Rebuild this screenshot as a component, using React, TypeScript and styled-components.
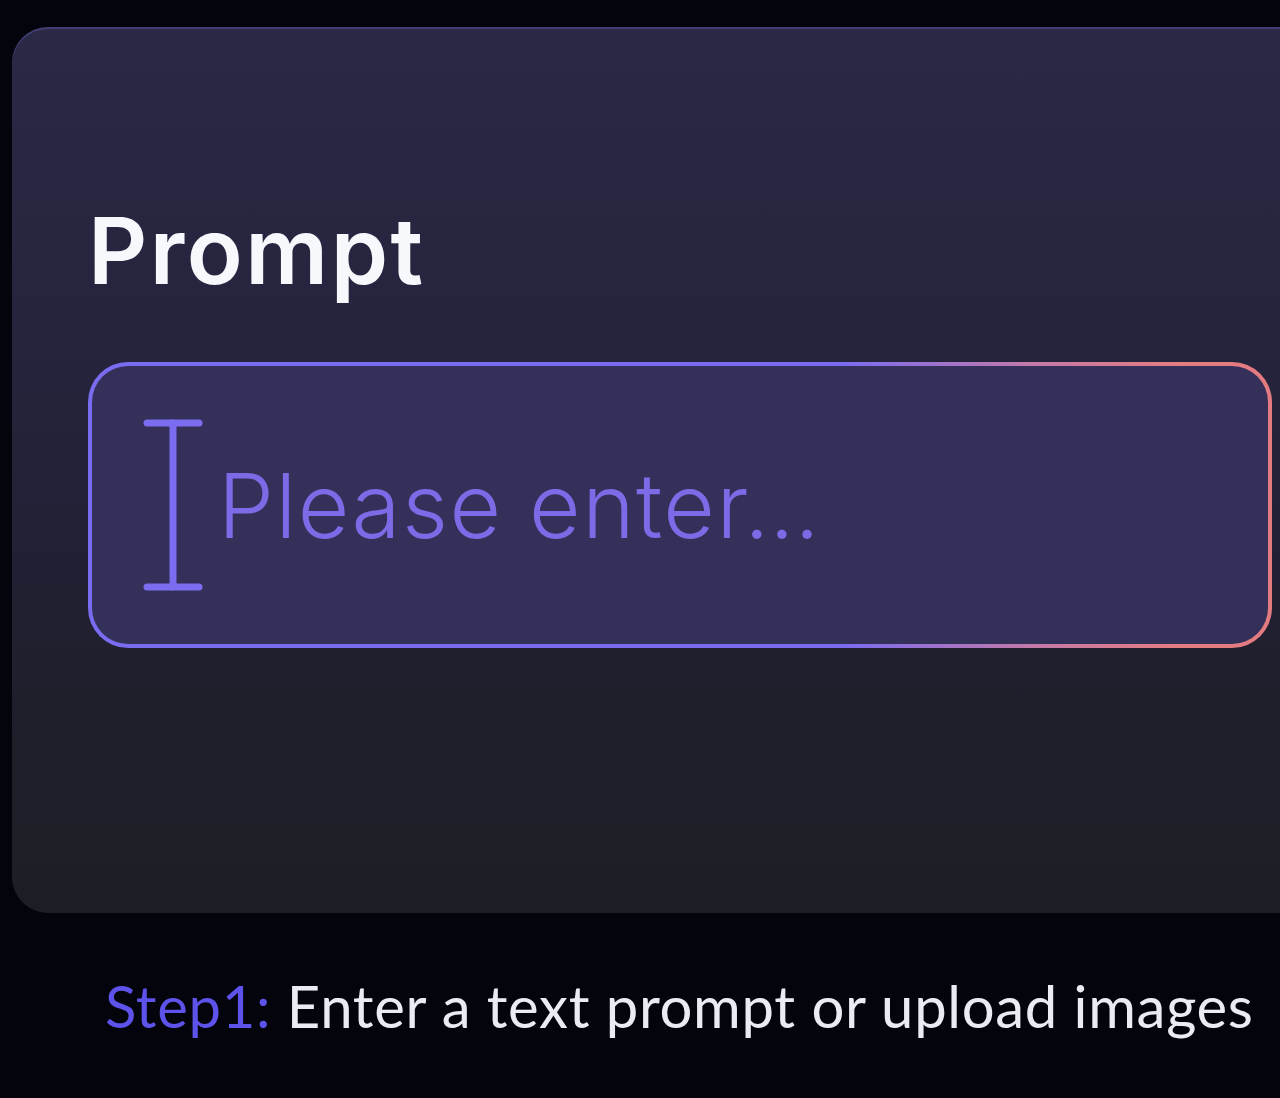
import React from "react";
import styled, { createGlobalStyle } from "styled-components";

const Global = createGlobalStyle`
  html, body {
    margin: 0;
    padding: 0;
    background: #03040c;
  }
  body {
    font-family: "Inter", "Noto Sans", sans-serif;
    overflow: hidden;
  }
`;

const Page = styled.div`
  width: 1280px;
  height: 1098px;
  overflow: hidden;
  background: #03040c;
  padding-top: 27px;
  box-sizing: border-box;
`;

const Card = styled.section`
  margin-left: 12px;
  margin-right: -80px;
  height: 886px;
  box-sizing: border-box;
  padding: 169px 0 0 76px;
  border-radius: 36px 0 0 36px;
  background: linear-gradient(
    180deg,
    #2a2946 0%,
    #26253f 30%,
    #222136 55%,
    #1f1f2b 78%,
    #1d1e25 100%
  );
  box-shadow: inset 0 2px 0 rgba(92, 88, 170, 0.45);
`;

const Label = styled.h2`
  margin: 0;
  font-family: "Inter", "Noto Sans", sans-serif;
  font-weight: 600;
  font-size: 92px;
  line-height: 110px;
  color: #f7f8fb;
  letter-spacing: 2.5px;
`;

const Field = styled.div`
  margin-top: 56px;
  width: 1184px;
  height: 286px;
  box-sizing: border-box;
  border: 4px solid transparent;
  border-radius: 40px;
  background: linear-gradient(#34305a, #33305a) padding-box,
    linear-gradient(90deg, #7a6cf0 0%, #7b6cef 64%, #c47aa8 80%, #e57c82 92%, #e47b80 100%) border-box;
  display: flex;
  align-items: center;
  padding-left: 51px;
  gap: 15px;
`;

const Caret = styled.svg`
  flex: none;
  display: block;
`;

const Placeholder = styled.span`
  font-family: "Inter", "Noto Sans", sans-serif;
  font-weight: 350;
  font-size: 89px;
  line-height: 1;
  color: #7b6be6;
  letter-spacing: 1.5px;
`;

const Hint = styled.p`
  margin: 58px 0 0 105px;
  font-family: "Lato", "Open Sans", sans-serif;
  font-size: 58px;
  line-height: 70px;
  color: #e9edf3;
  white-space: nowrap;
  letter-spacing: 0.7px;
`;

const Step = styled.span`
  color: #5d52ea;
`;

export default function App() {
  return (
    <>
      <Global />
      <Page>
        <Card>
          <Label>Prompt</Label>
          <Field>
            <Caret width="60" height="174" viewBox="0 0 60 174">
              <g stroke="#7b6cf0" strokeWidth="7" strokeLinecap="round" fill="none">
                <line x1="4" y1="5" x2="56" y2="5" />
                <line x1="30" y1="5" x2="30" y2="169" />
                <line x1="4" y1="169" x2="56" y2="169" />
              </g>
            </Caret>
            <Placeholder>Please enter…</Placeholder>
          </Field>
        </Card>
        <Hint>
          <Step>Step1:</Step> Enter a text prompt or upload images
        </Hint>
      </Page>
    </>
  );
}
